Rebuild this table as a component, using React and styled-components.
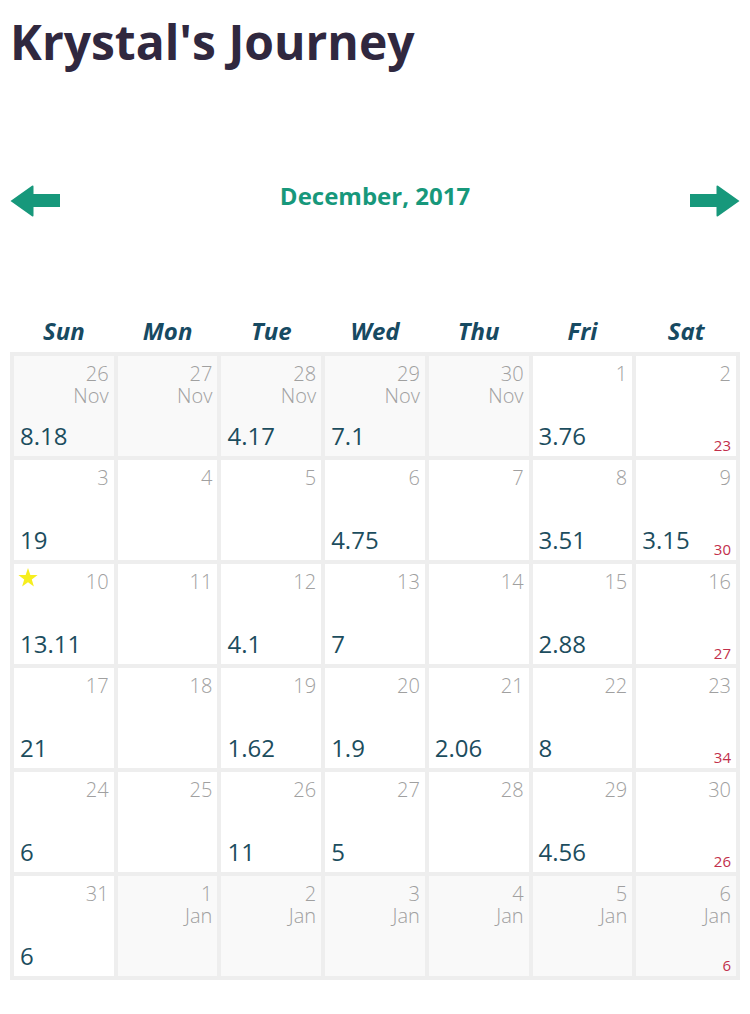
import React from "react";
import styled, { createGlobalStyle } from "styled-components";

const Global = createGlobalStyle`
  html, body { margin: 0; padding: 0; background: #fff; }
  body { font-family: "Open Sans", "Noto Sans", sans-serif; }
`;

const Page = styled.div`
  width: 750px;
  padding: 12px 10px 30px;
  box-sizing: border-box;
`;

const Title = styled.h1`
  margin: 0;
  font-size: 48px;
  line-height: 60px;
  font-weight: 700;
  color: #30283f;
`;

const Nav = styled.div`
  margin-top: 113px;
  height: 32px;
  display: flex;
  align-items: center;
  justify-content: space-between;
`;

const Month = styled.div`
  font-size: 24px;
  line-height: 30px;
  font-weight: 700;
  color: #17987b;
  padding-bottom: 10px;
`;

const ArrowBtn = styled.svg`
  width: 50px;
  height: 32px;
  display: block;
  transform: ${(p) => (p.$flip ? "scaleX(-1)" : "none")};
`;

const Arrow = ({ flip }) => (
  <ArrowBtn $flip={flip} viewBox="0 0 50 32">
    <path
      d="M0.5 16 L22 0.8 Q23.5 0 23.5 1.6 L23.5 9 L50 9 L50 22 L23.5 22 L23.5 30.4 Q23.5 32 22 31.2 Z"
      fill="#17987b"
    />
  </ArrowBtn>
);

const Weekdays = styled.div`
  margin-top: 99px;
  display: grid;
  grid-template-columns: repeat(7, 1fr);
  padding: 0 4px;
  column-gap: 4px;
`;

const Weekday = styled.div`
  text-align: center;
  font-size: 24px;
  line-height: 30px;
  font-weight: 700;
  font-style: italic;
  color: #174a62;
`;

const Grid = styled.div`
  margin-top: 6px;
  display: grid;
  grid-template-columns: repeat(7, 1fr);
  grid-auto-rows: 100px;
  gap: 4px;
  padding: 4px;
  background: #eeeeee;
`;

const Cell = styled.div`
  background: ${(p) => (p.$other ? "#f9f9f9" : "#ffffff")};
  display: flex;
  flex-direction: column;
  justify-content: space-between;
  min-width: 0;
`;

const Top = styled.div`
  display: flex;
  justify-content: space-between;
  align-items: flex-start;
  padding: 7px 5px 0 4px;
`;

const DateLabel = styled.div`
  text-align: right;
  font-size: 20px;
  line-height: 22px;
  font-weight: 300;
  color: #a0a0a0;
  margin-left: auto;
`;

const Star = styled.svg`
  width: 20px;
  height: 19px;
  display: block;
  margin-top: -3px;
`;

const Bottom = styled.div`
  display: flex;
  justify-content: space-between;
  align-items: flex-end;
  padding: 0 5px 3px 6px;
`;

const Value = styled.div`
  font-size: 24px;
  line-height: 28px;
  font-weight: 400;
  color: #1c4d5e;
  margin-bottom: 3px;
`;

const Total = styled.div`
  margin-left: auto;
  font-size: 15px;
  line-height: 15px;
  color: #c2304b;
`;

const days = ["Sun", "Mon", "Tue", "Wed", "Thu", "Fri", "Sat"];

const cells = [
  { d: 26, m: "Nov", v: "8.18" },
  { d: 27, m: "Nov" },
  { d: 28, m: "Nov", v: "4.17" },
  { d: 29, m: "Nov", v: "7.1" },
  { d: 30, m: "Nov" },
  { d: 1, v: "3.76" },
  { d: 2, t: "23" },
  { d: 3, v: "19" },
  { d: 4 },
  { d: 5 },
  { d: 6, v: "4.75" },
  { d: 7 },
  { d: 8, v: "3.51" },
  { d: 9, v: "3.15", t: "30" },
  { d: 10, v: "13.11", star: true },
  { d: 11 },
  { d: 12, v: "4.1" },
  { d: 13, v: "7" },
  { d: 14 },
  { d: 15, v: "2.88" },
  { d: 16, t: "27" },
  { d: 17, v: "21" },
  { d: 18 },
  { d: 19, v: "1.62" },
  { d: 20, v: "1.9" },
  { d: 21, v: "2.06" },
  { d: 22, v: "8" },
  { d: 23, t: "34" },
  { d: 24, v: "6" },
  { d: 25 },
  { d: 26, v: "11" },
  { d: 27, v: "5" },
  { d: 28 },
  { d: 29, v: "4.56" },
  { d: 30, t: "26" },
  { d: 31, v: "6" },
  { d: 1, m: "Jan" },
  { d: 2, m: "Jan" },
  { d: 3, m: "Jan" },
  { d: 4, m: "Jan" },
  { d: 5, m: "Jan" },
  { d: 6, m: "Jan", t: "6" },
];

export default function App() {
  return (
    <Page>
      <Global />
      <Title>Krystal's Journey</Title>
      <Nav>
        <Arrow />
        <Month>December, 2017</Month>
        <Arrow flip />
      </Nav>
      <Weekdays>
        {days.map((d) => (
          <Weekday key={d}>{d}</Weekday>
        ))}
      </Weekdays>
      <Grid>
        {cells.map((c, i) => (
          <Cell key={i} $other={!!c.m}>
            <Top>
              {c.star && (
                <Star viewBox="0 0 20 19">
                  <path
                    d="M10 0 L12.35 6.9 L19.6 7 L13.8 11.4 L15.9 18.4 L10 14.2 L4.1 18.4 L6.2 11.4 L0.4 7 L7.65 6.9 Z"
                    fill="#f6ee1e"
                  />
                </Star>
              )}
              <DateLabel>
                {c.d}
                {c.m && <br />}
                {c.m}
              </DateLabel>
            </Top>
            <Bottom>
              {c.v && <Value>{c.v}</Value>}
              {c.t && <Total>{c.t}</Total>}
            </Bottom>
          </Cell>
        ))}
      </Grid>
    </Page>
  );
}
